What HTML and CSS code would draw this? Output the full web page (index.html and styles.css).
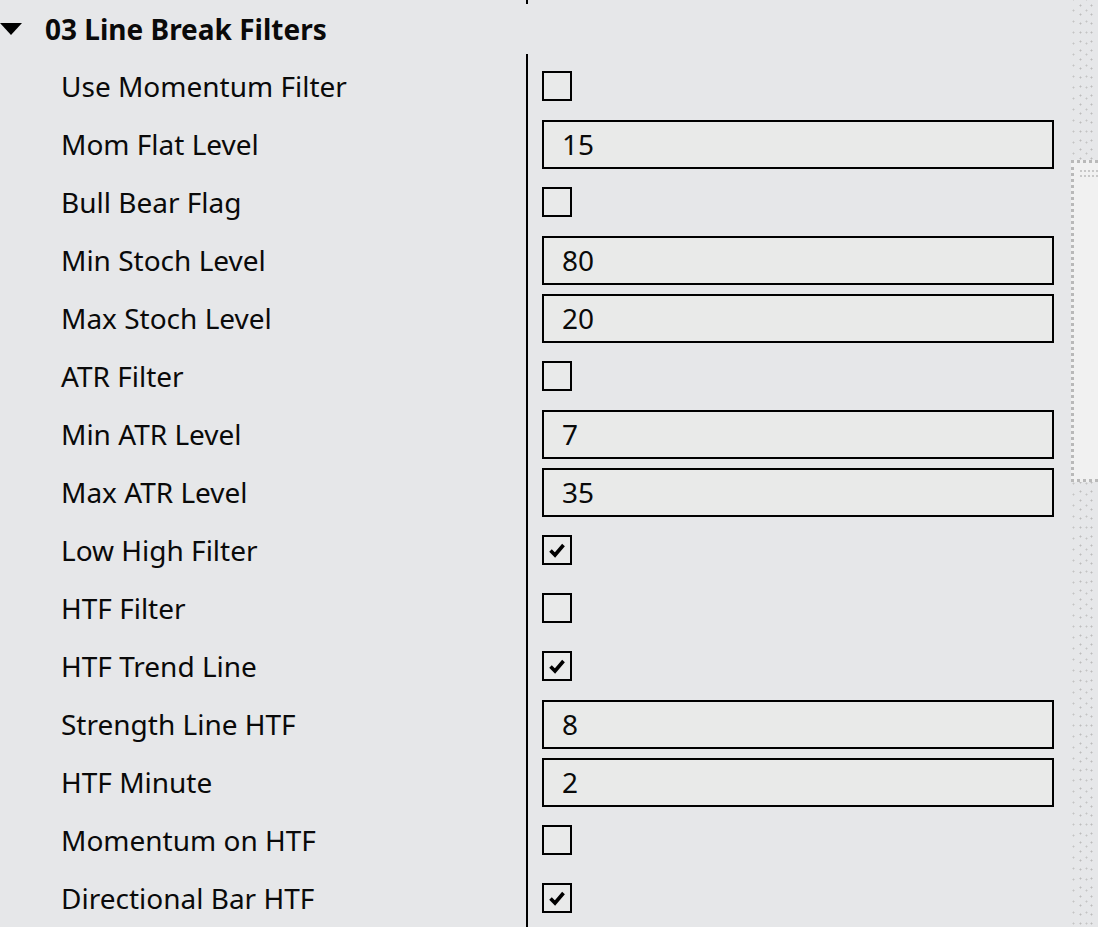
FILE: index.html
```html
<!DOCTYPE html>
<html>
<head>
<meta charset="utf-8">
<link rel="stylesheet" href="styles.css">
</head>
<body>
<div class="page">
  <div class="grid">
    <div class="stub"></div>
    <div class="category">
      <span class="caret"></span>
      <span class="cat-title">03 Line Break Filters</span>
    </div>
    <div class="rows">
      <div class="row"><div class="label">Use Momentum Filter</div><div class="value"><span class="check"></span></div></div>
      <div class="row"><div class="label">Mom Flat Level</div><div class="value"><div class="input">15</div></div></div>
      <div class="row"><div class="label">Bull Bear Flag</div><div class="value"><span class="check"></span></div></div>
      <div class="row"><div class="label">Min Stoch Level</div><div class="value"><div class="input">80</div></div></div>
      <div class="row"><div class="label">Max Stoch Level</div><div class="value"><div class="input">20</div></div></div>
      <div class="row"><div class="label">ATR Filter</div><div class="value"><span class="check"></span></div></div>
      <div class="row"><div class="label">Min ATR Level</div><div class="value"><div class="input">7</div></div></div>
      <div class="row"><div class="label">Max ATR Level</div><div class="value"><div class="input">35</div></div></div>
      <div class="row"><div class="label">Low High Filter</div><div class="value"><span class="check"><svg viewBox="0 0 26 26" class="tick"><path d="M6.5 13.5 L11 18 L19.5 8" /></svg></span></div></div>
      <div class="row"><div class="label">HTF Filter</div><div class="value"><span class="check"></span></div></div>
      <div class="row"><div class="label">HTF Trend Line</div><div class="value"><span class="check"><svg viewBox="0 0 26 26" class="tick"><path d="M6.5 13.5 L11 18 L19.5 8" /></svg></span></div></div>
      <div class="row"><div class="label">Strength Line HTF</div><div class="value"><div class="input">8</div></div></div>
      <div class="row"><div class="label">HTF Minute</div><div class="value"><div class="input">2</div></div></div>
      <div class="row"><div class="label">Momentum on HTF</div><div class="value"><span class="check"></span></div></div>
      <div class="row"><div class="label">Directional Bar HTF</div><div class="value"><span class="check"><svg viewBox="0 0 26 26" class="tick"><path d="M6.5 13.5 L11 18 L19.5 8" /></svg></span></div></div>
    </div>
  </div>
  <div class="scrollbar">
    <div class="thumb"><div class="grip"></div><div class="grip"></div></div>
  </div>
</div>
</body>
</html>
```

FILE: styles.css
```css
html, body {
  margin: 0;
  padding: 0;
  background: #e6e7e9;
  overflow: hidden;
}
body {
  font-family: "Noto Sans", "Open Sans", sans-serif;
  color: #0a0a0a;
}
.page {
  display: flex;
  width: 1098px;
  height: 927px;
  overflow: hidden;
}
.grid {
  width: 1071px;
  flex: none;
}
.stub {
  margin-left: 526px;
  width: 2px;
  height: 4px;
  background: #000;
}
.category {
  height: 50px;
  display: flex;
  align-items: center;
}
.caret {
  width: 0;
  height: 0;
  border-left: 11px solid transparent;
  border-right: 11px solid transparent;
  border-top: 12px solid #000;
  margin-right: 23px;
}
.cat-title {
  font-weight: bold;
  font-size: 28px;
}
.rows {
  padding-top: 3px;
  position: relative;
}
.rows::before {
  content: "";
  position: absolute;
  left: 526px;
  top: 0;
  bottom: 0;
  width: 2px;
  background: #000;
}
.row {
  display: flex;
  height: 58px;
  align-items: center;
}
.label {
  width: 465px;
  padding-left: 61px;
  font-size: 28px;
  flex: none;
}
.value {
  padding-left: 16px;
  flex: 1;
  display: flex;
  align-items: center;
}
.check {
  width: 26px;
  height: 26px;
  border: 2px solid #000;
  background: #e9eaea;
  display: block;
}
.tick {
  width: 26px;
  height: 26px;
  display: block;
}
.tick path {
  fill: none;
  stroke: #000;
  stroke-width: 3.6;
  stroke-linecap: butt;
  stroke-linejoin: miter;
}
.input {
  width: 490px;
  height: 45px;
  border: 2px solid #000;
  background: #e9eae9;
  padding-left: 18px;
  font-size: 28px;
  line-height: 45px;
}
.scrollbar {
  flex: 1;
  position: relative;
  background-color: #e6e7e9;
  background-image:
    radial-gradient(circle, #bcbcbc 0.8px, transparent 1.2px),
    radial-gradient(circle, #c4c4c4 0.8px, transparent 1.2px);
  background-size: 11px 9px, 13px 11px;
  background-position: 4px 1px, 9px 5px;
}
.thumb {
  position: absolute;
  left: 0;
  top: 160px;
  width: 24px;
  height: 312px;
  border: 3px dotted #b9b9b9;
  border-right: none;
  background: #f1f1f1;
  padding-top: 4px;
}
.grip {
  margin: 3px 0 0 6px;
  height: 0;
  border-top: 2px dotted #c8c8c8;
}
```
